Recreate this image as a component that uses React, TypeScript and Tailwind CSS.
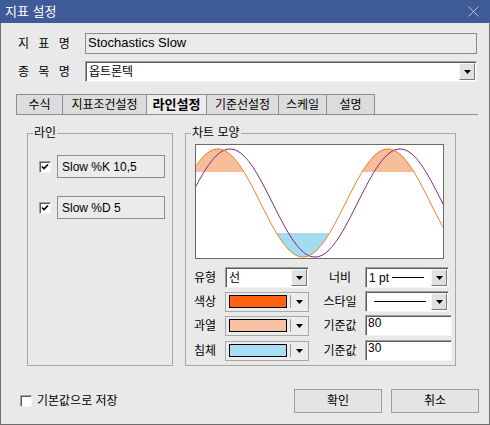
import React from 'react';

const W = 247;
const H = 113;

// 사인 곡선 좌표 (차트 미리보기용)
const wave = (shift: number) => {
  const pts: string[] = [];
  for (let x = 0; x <= W; x += 1) {
    const y = 58 - 54 * Math.cos((2 * Math.PI * (x - 22 - shift)) / 170);
    pts.push(`${x},${y.toFixed(2)}`);
  }
  return 'M' + pts.join(' L');
};

const Arrow = () => (
  <svg width="7" height="4" viewBox="0 0 7 4">
    <path d="M0 0h7L3.5 4z" fill="#000" />
  </svg>
);

const sunken =
  'border border-t-[#a0a0a0] border-l-[#a0a0a0] border-b-[#f4f4f4] border-r-[#f4f4f4] shadow-[inset_1px_1px_0_#5a5a5a]';

const ComboButton = () => (
  <div className="w-[16px] h-[17px] mr-[1px] bg-[#e1e1e1] border border-t-[#f8f8f8] border-l-[#f8f8f8] border-r-[#7a7a7a] border-b-[#7a7a7a] flex items-center justify-center">
    <Arrow />
  </div>
);

const Combo = ({ className, children }: { className: string; children?: React.ReactNode }) => (
  <div className={`${className} h-[21px] bg-white ${sunken} flex items-center`}>
    <div className="flex-1 flex items-center pl-[3px] overflow-hidden">{children}</div>
    <ComboButton />
  </div>
);

const ColorCombo = ({ color }: { color: string }) => (
  <div className="w-[84px] h-[20px] bg-[#ececec] border border-[#a8a8a8] flex items-center">
    <div className={`ml-[3px] w-[58px] h-[13px] border border-black ${color}`} />
    <div className="ml-[3px] w-px h-[13px] bg-[#9a9a9a]" />
    <div className="flex-1 flex justify-center">
      <Arrow />
    </div>
  </div>
);

const CheckBox = ({ checked }: { checked?: boolean }) => (
  <div className={`w-[12px] h-[12px] bg-white ${sunken} flex items-center justify-center`}>
    {checked && (
      <svg width="8" height="8" viewBox="0 0 8 8">
        <path d="M1 3.5 L3 5.5 L7 1.5" stroke="#000" strokeWidth="1.6" fill="none" />
      </svg>
    )}
  </div>
);

const tabs = [
  { name: '수식', w: 'w-[47px]' },
  { name: '지표조건설정', w: 'w-[84px]' },
  { name: '라인설정', w: 'w-[60px]', active: true },
  { name: '기준선설정', w: 'w-[72px]' },
  { name: '스케일', w: 'w-[48px]' },
  { name: '설명', w: 'w-[48px]' },
];

export default function App() {
  const orange = wave(0);
  const purple = wave(12);

  return (
    <div className="w-[490px] h-[425px] flex flex-col text-[12px] text-black font-['Liberation_Sans','Noto_Sans_CJK_KR',sans-serif]">
      {/* 타이틀바 */}
      <div className="h-[23px] bg-[#3e5b97] flex items-center justify-between pl-[5px] pr-[11px] text-white text-[13px]">
        <span>지표 설정</span>
        <svg width="11" height="11" viewBox="0 0 11 11">
          <path d="M0.5 0.5 L10.5 10.5 M10.5 0.5 L0.5 10.5" stroke="#b4bfd6" strokeWidth="1" />
        </svg>
      </div>

      <div className="flex-1 bg-[#e9e9e9] border-l border-r border-b border-[#6e6e6e] flex flex-col">
        {/* 지표명 */}
        <div className="mt-[10px] flex items-center h-[21px]">
          <span className="pl-[17px] w-[84px] tracking-[3px]">지 표 명</span>
          <div className="w-[392px] h-[21px] border border-[#8a8a8a] bg-[#eaeaea] pl-[2px] text-[13px] leading-[17px]">
            Stochastics Slow
          </div>
        </div>

        {/* 종목명 */}
        <div className="mt-[7px] flex items-center h-[21px]">
          <span className="pl-[17px] w-[84px] tracking-[3px]">종 목 명</span>
          <Combo className="w-[392px]">
            <span>옵트론텍</span>
          </Combo>
        </div>

        {/* 탭 */}
        <div className="mt-[12px] ml-[15px] w-[462px] h-[21px] flex border-b border-[#8e8e8e]">
          {tabs.map((t, i) => (
            <div
              key={t.name}
              className={`${t.w} h-[20px] flex items-center justify-center border-t border-r border-[#8e8e8e] ${
                i === 0 ? 'border-l' : ''
              } ${t.active ? 'bg-[#ececec] font-bold text-[13px]' : 'bg-[#dcdcdc]'}`}
            >
              {t.name}
            </div>
          ))}
        </div>

        <div className="mt-[11px] flex">
          {/* 라인 */}
          <fieldset className="ml-[26px] w-[146px] h-[240px] border border-[#a6a6a6]">
            <legend className="ml-[5px] px-[1px] leading-[14px]">라인</legend>
            <div className="mt-[15px] flex items-center">
              <div className="ml-[11px]">
                <CheckBox checked />
              </div>
              <div className="ml-[6px] w-[108px] h-[23px] border border-[#8c8c8c] bg-[#ebebeb] flex items-center pl-[4px] text-[12px]">
                Slow %K 10,5
              </div>
            </div>
            <div className="mt-[18px] flex items-center">
              <div className="ml-[11px]">
                <CheckBox checked />
              </div>
              <div className="ml-[6px] w-[108px] h-[23px] border border-[#8c8c8c] bg-[#ebebeb] flex items-center pl-[4px] text-[12px]">
                Slow %D 5
              </div>
            </div>
          </fieldset>

          {/* 차트 모양 */}
          <fieldset className="ml-[12px] w-[271px] h-[240px] border border-[#a6a6a6]">
            <legend className="ml-[5px] px-[1px] leading-[14px]">차트 모양</legend>
            <div className="mt-[4px] ml-[9px] w-[249px] h-[115px] border border-[#6a6a6a] bg-white">
              <svg width={W} height={H} viewBox={`0 0 ${W} ${H}`} className="block">
                <defs>
                  <clipPath id="over">
                    <rect x="0" y="0" width={W} height="27" />
                  </clipPath>
                  <clipPath id="under">
                    <rect x="0" y="88" width={W} height={H - 88} />
                  </clipPath>
                </defs>
                <path d={`${orange} L${W},${H} L0,${H} Z`} fill="#f6be98" clipPath="url(#over)" />
                <path d={`${orange} L${W},0 L0,0 Z`} fill="#a5dbf1" clipPath="url(#under)" />
                <path d={purple} fill="none" stroke="#7b2386" strokeWidth="1" />
                <path d={orange} fill="none" stroke="#ee7b22" strokeWidth="1" />
              </svg>
            </div>

            <div className="mt-[8px] flex items-center">
              <span className="ml-[8px] w-[31px]">유형</span>
              <Combo className="w-[84px]">
                <span>선</span>
              </Combo>
              <span className="ml-[6px] w-[50px] text-center">너비</span>
              <Combo className="w-[84px]">
                <span className="text-[12px]">1 pt</span>
                <span className="ml-[3px] w-[32px] h-px bg-black" />
              </Combo>
            </div>
            <div className="mt-[3px] flex items-center">
              <span className="ml-[8px] w-[31px]">색상</span>
              <ColorCombo color="bg-[#ff6310]" />
              <span className="ml-[6px] w-[50px] text-center">스타일</span>
              <Combo className="w-[84px]">
                <span className="ml-[5px] w-[52px] h-px bg-black" />
              </Combo>
            </div>
            <div className="mt-[3px] flex items-center">
              <span className="ml-[8px] w-[31px]">과열</span>
              <ColorCombo color="bg-[#f8c3a4]" />
              <span className="ml-[6px] w-[50px] text-center">기준값</span>
              <div className={`w-[87px] h-[21px] bg-white ${sunken} pl-[2px] leading-[14px] text-[12px]`}>80</div>
            </div>
            <div className="mt-[4px] flex items-center">
              <span className="ml-[8px] w-[31px]">침체</span>
              <ColorCombo color="bg-[#a8def6]" />
              <span className="ml-[6px] w-[50px] text-center">기준값</span>
              <div className={`w-[87px] h-[21px] bg-white ${sunken} pl-[2px] leading-[14px] text-[12px]`}>30</div>
            </div>
          </fieldset>
        </div>

        {/* 하단 */}
        <div className="mt-[23px] h-[24px] flex items-center">
          <div className="ml-[19px]">
            <CheckBox />
          </div>
          <span className="ml-[5px]">기본값으로 저장</span>
          <button className="ml-auto w-[88px] h-[24px] bg-[#e4e4e4] border border-[#9c9c9c]">확인</button>
          <button className="ml-[9px] mr-[10px] w-[88px] h-[24px] bg-[#e4e4e4] border border-[#9c9c9c]">취소</button>
        </div>
      </div>
    </div>
  );
}
